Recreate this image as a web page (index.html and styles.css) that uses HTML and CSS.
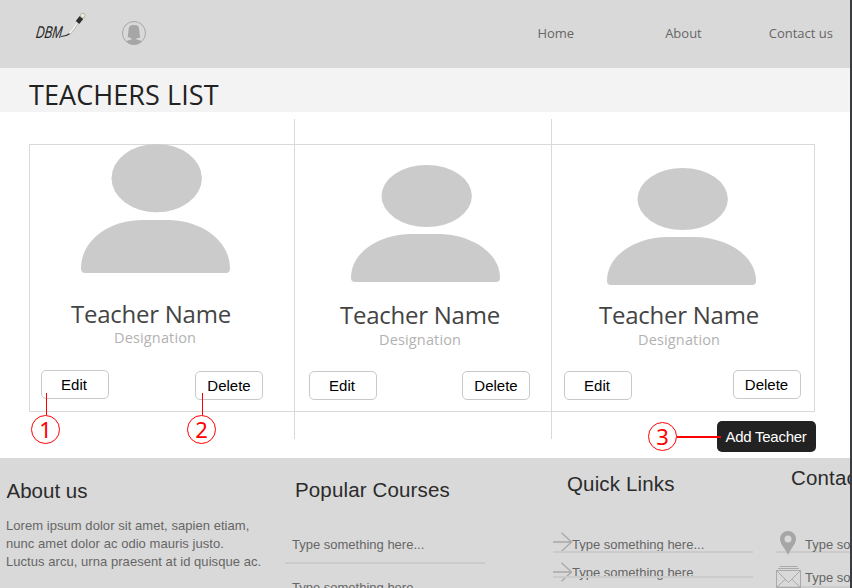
FILE: index.html
```html
<!DOCTYPE html>
<html lang="en">
<head>
<meta charset="utf-8">
<title>Teachers List</title>
<link rel="stylesheet" href="styles.css">
</head>
<body>
<svg class="defs" aria-hidden="true">
  <symbol id="person" viewBox="0 0 149 117" preserveAspectRatio="none">
    <ellipse cx="75.7" cy="31" rx="45.2" ry="31"/>
    <path d="M0 113C0 86 30 69 61 69H87C119 69 149 87 149 113Q149 117 145 117H4Q0 117 0 113Z"/>
  </symbol>
  <symbol id="arrow" viewBox="0 0 20 20">
    <path d="M0 10H19M8.500 .8L18.500 10L8.500 19.200" fill="none" stroke="#a8a8a8" stroke-width="1.300"/>
  </symbol>
</svg>
<div class="page">
  <header class="header">
    <svg class="logo" width="54" height="30" viewBox="0 0 54 30">
      <text class="logo-text" transform="translate(.5 26.500) skewX(-8)" x="0" y="0" textLength="26" lengthAdjust="spacingAndGlyphs">DBM</text>
      <path d="M26 25.500Q31 25.500 35 22.500" fill="none" stroke="#333" stroke-width="1.200"/>
      <path d="M34.500 22.500Q37.500 20 42 12.500" fill="none" stroke="#f3f3ea" stroke-width="1.500"/>
      <path d="M35.500 23Q38.500 20 43 13" fill="none" stroke="#999" stroke-width=".6"/>
      <path d="M42.500 11.500L46.500 6.500" stroke="#2e2e2a" stroke-width="4.500"/>
      <circle cx="47.800" cy="4.600" r="2.300" fill="#eeeae2" stroke="#aaa49b" stroke-width=".8"/>
    </svg>
    <svg class="user" width="24" height="24" viewBox="0 0 24 24">
      <circle cx="12" cy="12" r="11.500" fill="none" stroke="#a6a6a6"/>
      <path d="M7 16C5.500 17 5.500 16 6 14C6.500 11 6.300 9 6.800 7C7.400 4.500 10 3.700 12 4.200C15 3.700 17 5 17.200 8C17.500 11 17.400 13 18.200 16.500Q16 17.500 14.500 17L14.500 18.500Q18 19 19.700 20.200Q16.500 23.800 12 23.800T4.300 20.200Q6 19 9.500 18.500L9.500 17Q8 17.500 7 16Z" fill="#a6a6a6"/>
    </svg>
    <nav class="nav"><a>Home</a><a>About</a><a>Contact us</a></nav>
  </header>
  <div class="title-band"><h1>TEACHERS LIST</h1></div>
  <main class="main">
    <div class="teachers">
      <article class="card card-a">
        <svg class="avatar"><use href="#person"/></svg>
        <h2>Teacher Name</h2>
        <p>Designation</p>
        <div class="actions">
          <button>Edit<span class="callout drop"><b>1</b></span></button>
          <button class="low">Delete<span class="callout drop second"><b>2</b></span></button>
        </div>
      </article>
      <article class="card card-b">
        <svg class="avatar"><use href="#person"/></svg>
        <h2>Teacher Name</h2>
        <p>Designation</p>
        <div class="actions"><button class="low">Edit</button><button class="low">Delete</button></div>
      </article>
      <article class="card card-c">
        <svg class="avatar"><use href="#person"/></svg>
        <h2>Teacher Name</h2>
        <p>Designation</p>
        <div class="actions"><button class="low">Edit</button><button>Delete</button></div>
      </article>
    </div>
    <div class="add-row"><button class="add">Add Teacher<span class="callout side"><b>3</b></span></button></div>
  </main>
  <footer class="footer">
    <section class="about">
      <h3>About us</h3>
      <p>Lorem ipsum dolor sit amet, sapien etiam,<br>nunc amet dolor ac odio mauris justo.<br>Luctus arcu, urna praesent at id quisque ac.</p>
    </section>
    <section class="courses">
      <h3>Popular Courses</h3>
      <div class="field">Type something here...</div>
      <div class="field">Type something here...</div>
    </section>
    <section class="links">
      <h3>Quick Links</h3>
      <div class="field"><svg class="arrow"><use href="#arrow"/></svg><span>Type something here...</span></div>
      <div class="field cut"><svg class="arrow"><use href="#arrow"/></svg><span>Type something here</span></div>
    </section>
    <section class="contact">
      <h3>Contact us</h3>
      <div class="field"><svg class="pin" width="16" height="24" viewBox="0 0 16 24"><path fill-rule="evenodd" d="M8 0A8 8 0 0 1 16 8C16 13 11 17 8 24C5 17 0 13 0 8A8 8 0 0 1 8 0ZM8 4.600A3.500 3.500 0 1 0 8 11.600A3.500 3.500 0 1 0 8 4.600Z" fill="#a6a6a6"/></svg><span>Type something here...</span></div>
      <div class="field"><svg class="mail" width="25" height="22" viewBox="0 0 25 22"><path d="M.5 4.500H24.500V21.500H.5ZM.5 4.500L12.500 16.500L24.500 4.500M.5 21.500L9 13.500M24.500 21.500L16 13.500M2 2.500H23M3.500 .5H21.500" fill="none" stroke="#a9a9a9"/></svg><span>Type something here...</span></div>
    </section>
  </footer>
</div>
</body>
</html>
```
FILE: styles.css
```css
* { box-sizing: border-box; }
body, h1, h2, h3, p { margin: 0; font-weight: 400; }
body { background: #fff; font-family: "Liberation Sans", Arial, sans-serif; }
.defs { display: block; width: 0; height: 0; }
.page { width: 852px; height: 588px; overflow: hidden; border-right: 2px solid #3b3b42; }

.header { height: 68px; display: flex; align-items: flex-start; background: #d9d9d9; padding: 11px 17px 0 35px; }
.logo { overflow: visible; }
.logo-text { font: italic 17px "Liberation Sans", sans-serif; fill: #222; }
.user { margin: 10px 0 0 33px; }
.nav { margin-left: auto; padding-top: 12px; display: flex; font: 13px/20px "Open Sans", sans-serif; color: #666; white-space: nowrap; }
.nav a:nth-child(1) { margin-right: 91px; }
.nav a:nth-child(2) { margin-right: 67px; }

.title-band { height: 44px; background: #f3f3f3; padding: 8px 0 0 29px; }
.title-band h1 { font: 27px/37px "Open Sans", sans-serif; letter-spacing: .08px; color: #222; white-space: nowrap; }

.main { height: 346px; padding: 32px 34px 0 29px; }
.teachers { width: 786px; height: 268px; display: grid; grid-template-columns: 264px 257px 263px; border: 1px solid #d9d9d9; }
.card { position: relative; height: 266px; }
.card + .card::before { content: ""; position: absolute; left: 0; top: -26px; width: 1px; height: 320px; background: #d9d9d9; }
.avatar { display: block; width: 149px; height: 117px; fill: #cbcbcb; margin: 20px 0 0 57px; }
.card-a .avatar { height: 129px; margin: -1px 0 0 51px; }
.card-c .avatar { margin: 23px 0 0 56px; }
.card h2 { font: 24px/32px "Open Sans", sans-serif; letter-spacing: -.25px; color: #444; white-space: nowrap; margin: 17px 0 0 46px; }
.card-a h2 { margin: 25px 0 0 41px; }
.card-c h2 { margin: 14px 0 0 48px; }
.card p { font: 14.5px/20px "Open Sans", sans-serif; letter-spacing: .15px; color: #b2b2b2; white-space: nowrap; margin: -1px 0 0 85px; }
.card-a p { margin: -2px 0 0 84px; }
.card-c p { margin-left: 87px; }
.actions { display: flex; justify-content: space-between; padding: 20px 21px 0 15px; }
.card-a .actions { padding: 22px 31px 0 11px; }
.card-c .actions { padding: 20px 13px 0 13px; }
button { position: relative; width: 68px; height: 29px; padding: 0 2px 0 0; border: 1px solid #c9c9c9; border-radius: 5px; background: #fff; color: #000; font: 15px/27px "Liberation Sans", sans-serif; text-align: center; }
.actions .low { margin-top: 1px; padding-right: 0; }
.card-b .low:first-child, .card-c .low:first-child { padding-right: 2px; }
.card-c button:last-child { padding-right: 1px; }

.add-row { display: flex; justify-content: flex-end; padding-top: 9px; margin-right: 1px; }
.add { width: 99px; height: 31px; margin-right: -1px; border: 0; background: #222; color: #fff; padding: 0 1px 0 0; line-height: 31px; letter-spacing: -.25px; }

.callout b { display: block; width: 29px; height: 29px; border: 1px solid #f00; border-radius: 50%; color: #f00; font: 22px/26px "Noto Sans", sans-serif; letter-spacing: 0; text-align: center; }
.callout.drop { position: absolute; left: -11px; top: 22px; z-index: 2; }
.callout.drop.second { left: -9px; top: 21px; }
.callout.drop::before { content: ""; display: block; width: 1px; height: 22px; margin-left: 15px; background: #f00; }
.callout.side { position: absolute; left: -69px; top: 1px; display: flex; align-items: center; }
.callout.side::after { content: ""; width: 44px; height: 2px; background: #f00; }

.footer { height: 130px; display: grid; grid-template-columns: 285px 268px 223px 74px; background: #d9d9d9; overflow: hidden; }
.footer h3 { font-size: 20.5px; letter-spacing: .15px; line-height: 24px; color: #2b2b2b; white-space: nowrap; }
.footer section { font-size: 13px; color: #666; white-space: nowrap; overflow: hidden; }
.about { padding: 21px 0 0 6px; }
.about h3 { letter-spacing: 0; margin-left: .5px; }
.about p { margin-top: 14px; line-height: 18px; letter-spacing: .05px; }
.courses { padding-top: 20px; }
.courses h3 { margin-left: 10px; }
.courses .field { width: 200px; height: 42px; padding: 15px 0 0 7px; line-height: 18px; border-bottom: 2px solid #cbcbcb; }
.courses h3 + .field { height: 62px; padding-top: 34px; }
.links { padding-top: 14px; }
.links h3 { margin: 0 0 36px 14px; }
.links .field { position: relative; display: flex; align-items: flex-start; width: 200px; height: 21px; line-height: 25px; }
.links .field::after { content: ""; position: absolute; left: 0; right: 0; bottom: 0; height: 2px; background: #cbcbcb; }
.links .cut { height: 25px; padding-top: 7px; line-height: 26px; }
.links .cut .arrow { margin-top: 2px; }
.links .field span { margin-left: -1px; }
.arrow { width: 20px; height: 20px; flex: none; }
.contact { padding-top: 8px; }
.contact h3 { margin: 0 0 41px 15px; }
.contact .field { display: flex; height: 22px; border-bottom: 2px solid #cbcbcb; line-height: 28px; }
.contact .field + .field { height: 35px; padding-top: 13px; line-height: 24px; }
.pin { flex: none; margin: 0 9px 0 4px; }
.mail { flex: none; margin-right: 4px; }
```
